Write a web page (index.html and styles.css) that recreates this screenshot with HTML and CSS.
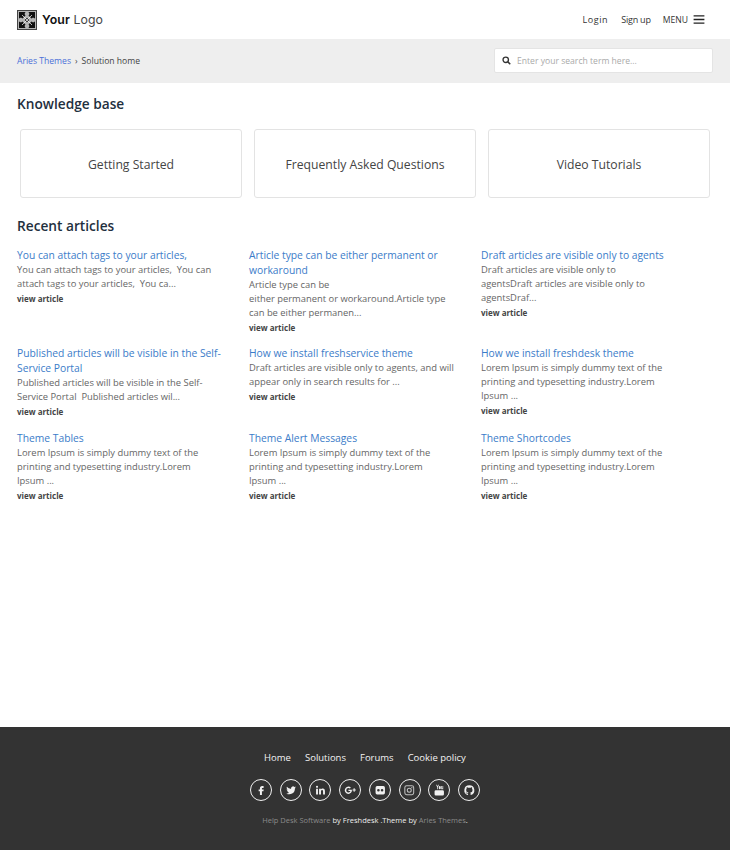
FILE: index.html
```html
<!DOCTYPE html>
<html lang="en">
<head>
<meta charset="utf-8">
<title>Knowledge base</title>
<link rel="stylesheet" href="styles.css">
</head>
<body>
<header class="topbar">
  <a class="logo" href="#">
    <svg class="logo-mark" viewBox="0 0 20 20" width="20" height="20">
      <rect x="0.5" y="0.5" width="19" height="19" fill="#b5b5b5" stroke="#444"/>
      <path d="M2 2h6.500l-1 2 1 1.500L5.500 8.500 4 7.500l-2 1zM18 2h-6.500l1 2-1 1.500 3 3L16 7.500l2 1zM2 18h6.500l-1-2 1-1.500-3-3L4 12.500l-2-1zM18 18h-6.500l1-2-1-1.500 3-3 1.500 1 2-1z" fill="#111"/>
      <path d="M10 7.800l2.200 2.200-2.200 2.200L7.800 10z" fill="#111"/>
      <path d="M5 5l10 10M15 5L5 15" stroke="#fff" stroke-width=".7"/>
    </svg>
    <span class="logo-text"><b>Your</b> Logo</span>
  </a>
  <nav class="topnav">
    <a class="login" href="#">Login</a>
    <a class="signup" href="#">Sign up</a>
    <a class="menu" href="#">MENU
      <svg viewBox="0 0 12 10" width="12" height="9"><path d="M0 1h12M0 5h12M0 9h12" stroke="#222" stroke-width="1.600"/></svg>
    </a>
  </nav>
</header>
<div class="crumbbar">
  <div class="crumbs"><a href="#">Aries Themes</a><span class="sep">›</span><span>Solution home</span></div>
  <div class="search">
    <svg viewBox="0 0 12 12" width="9" height="9"><circle cx="5" cy="5" r="3.600" fill="none" stroke="#333" stroke-width="1.800"/><path d="M7.800 7.800L11 11" stroke="#333" stroke-width="2"/></svg>
    <span>Enter your search term here...</span>
  </div>
</div>
<main class="content">
  <h2 class="kb-title">Knowledge base</h2>
  <div class="cards">
    <a class="card" href="#">Getting Started</a>
    <a class="card" href="#">Frequently Asked Questions</a>
    <a class="card" href="#">Video Tutorials</a>
  </div>
  <h2 class="recent-title">Recent articles</h2>
  <div class="articles">
    <article class="article"><a class="a-title" href="#">You can attach tags to your articles,</a><p>You can attach tags to your articles,&nbsp; You can attach tags to your articles,&nbsp; You ca...</p><a class="more" href="#">view article</a></article>
    <article class="article"><a class="a-title" href="#">Article type can be either permanent or workaround</a><p>Article type can be<br>either permanent or workaround.Article type can be either permanen...</p><a class="more" href="#">view article</a></article>
    <article class="article"><a class="a-title" href="#">Draft articles are visible only to agents</a><p>Draft articles are visible only to<br>agentsDraft articles are visible only to agentsDraf...</p><a class="more" href="#">view article</a></article>
    <article class="article"><a class="a-title" href="#">Published articles will be visible in the Self-Service Portal</a><p>Published articles will be visible in the Self-Service Portal&nbsp; Published articles wil...</p><a class="more" href="#">view article</a></article>
    <article class="article"><a class="a-title" href="#">How we install freshservice theme</a><p>Draft articles are visible only to agents, and will appear only in search results for ...</p><a class="more" href="#">view article</a></article>
    <article class="article"><a class="a-title" href="#">How we install freshdesk theme</a><p>Lorem Ipsum is simply dummy text of the printing and typesetting industry.Lorem<br>Ipsum ...</p><a class="more" href="#">view article</a></article>
    <article class="article"><a class="a-title" href="#">Theme Tables</a><p>Lorem Ipsum is simply dummy text of the printing and typesetting industry.Lorem<br>Ipsum ...</p><a class="more" href="#">view article</a></article>
    <article class="article"><a class="a-title" href="#">Theme Alert Messages</a><p>Lorem Ipsum is simply dummy text of the printing and typesetting industry.Lorem<br>Ipsum ...</p><a class="more" href="#">view article</a></article>
    <article class="article"><a class="a-title" href="#">Theme Shortcodes</a><p>Lorem Ipsum is simply dummy text of the printing and typesetting industry.Lorem<br>Ipsum ...</p><a class="more" href="#">view article</a></article>
  </div>
</main>
<footer class="footer">
  <nav class="footnav"><a href="#">Home</a><a href="#">Solutions</a><a href="#">Forums</a><a href="#">Cookie policy</a></nav>
  <div class="socials">
    <a class="social" href="#"><svg viewBox="0 0 24 24"><path d="M14 7.500h2.500V4h-3C11 4 9.500 5.800 9.500 8.200V10.500H7v3.500h2.500v7h3.800v-7h2.900l.5-3.500h-3.400V8.300c0-.5.300-.8.700-.8z"/></svg></a>
    <a class="social" href="#"><svg viewBox="0 0 24 24"><path d="M21 6.500c-.7.300-1.400.5-2.200.6.800-.5 1.400-1.200 1.700-2.100-.7.400-1.500.8-2.400.9a3.800 3.800 0 0 0-6.500 3.500C8.400 9.300 5.600 7.800 3.700 5.500c-1 1.700-.5 3.900 1.200 5.100-.6 0-1.200-.2-1.700-.5 0 1.900 1.300 3.400 3 3.800-.5.100-1.100.2-1.700.1.500 1.500 1.900 2.600 3.600 2.600A7.600 7.600 0 0 1 2.500 18a10.700 10.700 0 0 0 16.500-9.500c.8-.6 1.500-1.200 2-2z"/></svg></a>
    <a class="social" href="#"><svg viewBox="0 0 24 24"><path d="M4 9h3.600v11H4zM5.800 3.500a2 2 0 1 1 0 4 2 2 0 0 1 0-4zM9.800 9h3.400v1.500c.6-1 1.800-1.900 3.500-1.900 3.500 0 4.300 2.300 4.300 5.300V20h-3.600v-5.500c0-1.400 0-3-1.900-3s-2.100 1.400-2.100 2.900V20H9.800z"/></svg></a>
    <a class="social" href="#"><svg viewBox="0 0 24 24"><path d="M8.500 10.800v2.800h3.800c-.3 1.500-1.600 2.600-3.800 2.600a4.200 4.200 0 0 1 0-8.400c1.200 0 2 .5 2.700 1l2-2a7 7 0 1 0-4.700 12.200c4 0 6.700-2.800 6.700-6.900 0-.5 0-.9-.1-1.300zM20.500 10.500v-2.200h-2v2.200h-2.200v2h2.200v2.200h2v-2.200h2.200v-2z"/></svg></a>
    <a class="social" href="#"><svg viewBox="0 0 24 24"><path fill-rule="evenodd" d="M6 4h12a3 3 0 0 1 3 3v10a3 3 0 0 1-3 3H6a3 3 0 0 1-3-3V7a3 3 0 0 1 3-3zm2.500 5.500a2.500 2.500 0 1 0 0 5 2.500 2.500 0 0 0 0-5zm7 0a2.500 2.500 0 1 0 0 5 2.500 2.500 0 0 0 0-5z"/></svg></a>
    <a class="social" href="#"><svg viewBox="0 0 24 24"><path fill-rule="evenodd" d="M7 2.500h10A4.500 4.500 0 0 1 21.500 7v10a4.500 4.500 0 0 1-4.500 4.500H7A4.500 4.500 0 0 1 2.500 17V7A4.500 4.500 0 0 1 7 2.500zm0 2A2.500 2.500 0 0 0 4.500 7v10A2.500 2.500 0 0 0 7 19.500h10a2.500 2.500 0 0 0 2.500-2.500V7A2.500 2.500 0 0 0 17 4.500zm5 2.700a4.800 4.800 0 1 1 0 9.600 4.800 4.800 0 0 1 0-9.600zm0 2a2.800 2.800 0 1 0 0 5.600 2.800 2.800 0 0 0 0-5.600zm5-3.400a1.200 1.200 0 1 1 0 2.400 1.200 1.200 0 0 1 0-2.400z" opacity=".75"/></svg></a>
    <a class="social" href="#"><svg viewBox="0 0 24 24"><path fill-rule="evenodd" d="M5.500 12h13a2.500 2.500 0 0 1 2.500 2.500v5a2.500 2.500 0 0 1-2.500 2.500h-13A2.500 2.500 0 0 1 3 19.500v-5A2.500 2.500 0 0 1 5.500 12zM6 1.500h1.500l1.200 3 1.200-3h1.500l-2 4.500v4H8V6zM13 4c1.200 0 1.900.7 1.900 1.800v2.500c0 1.100-.7 1.800-1.900 1.800s-1.900-.7-1.900-1.800V5.800C11.100 4.700 11.800 4 13 4zM15.800 4h1.400v4.800c.4 0 .7-.2 1-.5V4h1.400v6h-1.400v-.5c-.5.400-.9.600-1.400.6-.7 0-1-.5-1-1.200z"/></svg></a>
    <a class="social" href="#"><svg viewBox="0 0 24 24"><path d="M12 2.500a9.500 9.500 0 0 0-3 18.500c.5.100.7-.2.700-.5v-1.700c-2.600.6-3.200-1.200-3.200-1.200-.4-1.100-1-1.400-1-1.400-.9-.6.100-.6.100-.6 1 .1 1.500 1 1.500 1 .9 1.500 2.200 1.100 2.700.8.100-.6.300-1.100.6-1.300-2.100-.2-4.300-1.100-4.300-4.700 0-1 .4-1.900 1-2.500-.1-.2-.4-1.200.1-2.500 0 0 .8-.3 2.600 1a9 9 0 0 1 4.800 0c1.800-1.300 2.600-1 2.600-1 .5 1.300.2 2.300.1 2.500.6.600 1 1.500 1 2.500 0 3.600-2.200 4.500-4.300 4.700.3.300.6.900.6 1.800v2.600c0 .3.200.6.700.5a9.500 9.500 0 0 0-3-18.500z"/></svg></a>
  </div>
  <p class="credit"><span class="dim">Help Desk Software</span> by Freshdesk .Theme by <span class="dim">Aries Themes</span>.</p>
</footer>
</body>
</html>
```
FILE: styles.css
```css
* { box-sizing: border-box; }
html, body { margin: 0; padding: 0; }
body { width: 730px; height: 850px; display: flex; flex-direction: column; background: #fff; font-family: "Open Sans", "Liberation Sans", sans-serif; color: #333; }
a { text-decoration: none; color: inherit; }
.topbar { height: 39px; display: flex; align-items: center; justify-content: space-between; padding: 0 25px 0 17px; }
.logo { display: flex; align-items: center; gap: 5px; }
.logo-mark { display: block; }
.logo-text { font-family: Inter, "Liberation Sans", sans-serif; font-size: 12.300px; letter-spacing: .1px; color: #444; }
.logo-text b { font-weight: 600; color: #111; }
.topnav { display: flex; align-items: center; font-size: 9px; color: #333; }
.login { letter-spacing: .6px; margin-right: 13px; }
.signup { letter-spacing: -.2px; margin-right: 12px; }
.menu { display: flex; align-items: center; gap: 5px; font-size: 8.600px; }
.crumbbar { height: 44px; padding: 0 17px 1px; background: #eee; display: flex; align-items: center; justify-content: space-between; }
.crumbs { padding-top: 1px; font-size: 8.600px; color: #444; }
.crumbs a { color: #4a6fd8; }
.sep { margin: 0 4px 0 4px; }
.search { width: 219px; height: 25px; background: #fff; border: 1px solid #e4e4e4; border-radius: 2px; display: flex; align-items: center; gap: 6px; padding-left: 7px; font-size: 8.600px; color: #aaa; }
.content { flex: 1; padding: 0 17px; }
.kb-title { margin: 12px 0 0; font-size: 13.700px; line-height: 18px; font-weight: 600; color: #1f3040; }
.cards { display: grid; grid-template-columns: repeat(3, 222px); gap: 12px; margin: 16px 0 0 3px; }
.card { height: 69px; padding-top: 1px; border: 1px solid #e3e3e3; border-radius: 3px; display: flex; align-items: center; justify-content: center; font-size: 12.200px; color: #444; }
.recent-title { margin: 19px 0 0; font-size: 13.700px; line-height: 18px; font-weight: 600; color: #1f3040; }
.articles { display: grid; grid-template-columns: repeat(3, 210px); grid-template-rows: 98px 85px auto; column-gap: 22px; margin-top: 13px; }
.a-title { display: block; font-size: 10.300px; line-height: 15px; color: #3b7cc9; }
.article p { margin: 0; font-size: 9.400px; line-height: 14.200px; color: #666; }
.more { display: block; margin-top: .5px; font-size: 8px; line-height: 14px; font-weight: 700; color: #444; }
.footer { height: 123px; background: #333; display: flex; flex-direction: column; align-items: center; color: #fff; }
.footnav { display: flex; gap: 14px; margin-top: 23px; font-size: 9.500px; line-height: 15px; color: #f2f2f2; }
.socials { display: flex; gap: 7.700px; margin-top: 14px; }
.social { width: 22px; height: 22px; border: 1.700px solid #f0f0f0; border-radius: 50%; display: flex; align-items: center; justify-content: center; }
.social svg { width: 12.500px; height: 12.500px; fill: #f0f0f0; display: block; }
.credit { margin: 13px 0 0; font-size: 7.500px; line-height: 12px; color: #eee; }
.dim { color: #8a8a8a; }
```
